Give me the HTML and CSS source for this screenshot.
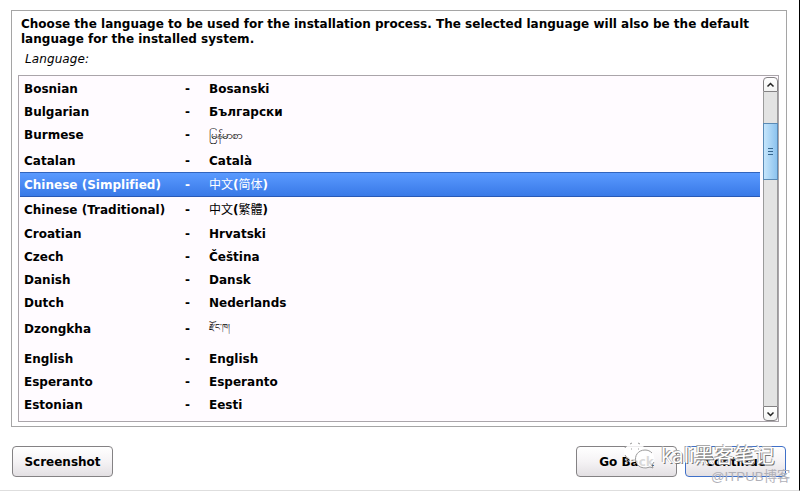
FILE: index.html
```html
<!DOCTYPE html>
<html lang="en">
<head>
  <meta charset="UTF-8">
  <title>Select a language</title>
  <link rel="stylesheet" href="styles.css">
</head>
<body>
  <main class="panel">
    <h1>Choose the language to be used for the installation process. The selected language will also be the default<br>language for the installed system.</h1>
    <p class="label">Language:</p>
    <div class="list-box">
      <ul class="languages">
        <li><span>Bosnian</span><span>-</span><span>Bosanski</span></li>
        <li><span>Bulgarian</span><span>-</span><span>Български</span></li>
        <li class="burmese"><span>Burmese</span><span>-</span><span class="script">မြန်မာစာ</span></li>
        <li><span>Catalan</span><span>-</span><span>Català</span></li>
        <li class="cjk selected"><span>Chinese (Simplified)</span><span>-</span><span><i>中文</i>(<i>简体</i>)</span></li>
        <li class="cjk"><span>Chinese (Traditional)</span><span>-</span><span><i>中文</i>(<i>繁體</i>)</span></li>
        <li><span>Croatian</span><span>-</span><span>Hrvatski</span></li>
        <li><span>Czech</span><span>-</span><span>Čeština</span></li>
        <li><span>Danish</span><span>-</span><span>Dansk</span></li>
        <li><span>Dutch</span><span>-</span><span>Nederlands</span></li>
        <li class="dzongkha"><span>Dzongkha</span><span>-</span><span class="script">རྫོང་ཁ།</span></li>
        <li><span>English</span><span>-</span><span>English</span></li>
        <li><span>Esperanto</span><span>-</span><span>Esperanto</span></li>
        <li><span>Estonian</span><span>-</span><span>Eesti</span></li>
      </ul>
      <div class="scrollbar">
        <div class="arrow up"><svg width="9" height="6" viewBox="0 0 9 6"><path d="M1.5 4.5l3-3 3 3"/></svg></div>
        <div class="track">
          <div class="thumb"><svg width="5" height="7" viewBox="0 0 5 7"><path d="M0 .5h5M0 3.5h5M0 6.5h5"/></svg></div>
        </div>
        <div class="arrow down"><svg width="9" height="6" viewBox="0 0 9 6"><path d="M1.5 1.5l3 3 3-3"/></svg></div>
      </div>
    </div>
  </main>

  <footer class="buttons">
    <button>Screenshot</button>
    <button class="back">Go Back</button>
    <button class="primary">Continue</button>
  </footer>

  <div class="watermark">
    <svg width="34" height="28" viewBox="0 0 34 28">
      <ellipse class="bubble" cx="12" cy="11" rx="11" ry="9"/>
      <path class="bubble-edge" d="M2 7l1-2M7 3l2-1M15 2l2 1M2 14l2 3M4 18l-1 3 4-2M8 8h1M15 8h1"/>
      <circle class="bubble" cx="22" cy="18" r="9.5"/>
      <path class="bubble-edge" d="M13 21c-2-6 2-12 9-12 3 0 5 1 7 3M14 23c2 3 5 4 9 4l4-1 3 1-1-3 2-3"/>
    </svg>
    <span>kali<b>黑客笔记</b></span>
  </div>
  <div class="credit">@ITPUB博客</div>
</body>
</html>
```

FILE: styles.css
```css
* {
  box-sizing: border-box;
}

body {
  position: relative;
  width: 800px;
  height: 491px;
  margin: 0;
  padding: 10px 12px 0 11px;
  overflow: hidden;
  background: #fff;
  border-right: 1px solid #000;
  border-bottom: 1px solid #dedede;
  color: #000;
  font: bold 12px/15px "DejaVu Sans", "Noto Sans CJK SC", sans-serif;
  letter-spacing: .01px;
}

.panel {
  width: 776px;
  height: 417px;
  padding: 6px 7px 0;
  border: 1px solid #a5a5a5;
}

h1 {
  margin: 0 0 0 2px;
  font-size: 12px;
  line-height: 15px;
  white-space: nowrap;
}

.label {
  margin: 5px 0 8px 6px;
  font-weight: normal;
  font-style: italic;
  letter-spacing: .1px;
}

.list-box {
  display: flex;
  justify-content: space-between;
  width: 761px;
  height: 347px;
  margin-left: -1px;
  padding: 1px 0 0 1px;
  border: 1px solid #aaa5aa;
  background: #fffbff;
}

.languages {
  width: 740px;
  margin: 0;
  padding: 0;
  list-style: none;
}

.languages li {
  display: grid;
  grid-template-columns: 161px 24px 1fr;
  align-items: center;
  height: 23px;
  padding: 2px 0 0 4px;
  white-space: nowrap;
}

.languages li.cjk {
  height: 25px;
}

.languages i {
  font-weight: normal;
  font-style: normal;
}

.languages li.burmese {
  height: 26px;
  padding-bottom: 3px;
}

.languages li.dzongkha {
  height: 33px;
  padding-bottom: 4px;
}

.script {
  font-size: 11.5px;
  font-weight: normal;
}

.dzongkha .script {
  padding-bottom: 4px;
  font-size: 8.5px;
}

.languages li.selected {
  border-top: 1px solid #3164bd;
  border-bottom: 1px solid #2959b5;
  background: linear-gradient(#5a9aff, #3979e7);
  color: #fff;
}

.scrollbar {
  display: flex;
  flex-direction: column;
  width: 15px;
  height: 344px;
}

.arrow {
  display: flex;
  align-items: center;
  justify-content: center;
  width: 15px;
  height: 15px;
  border: 1px solid #848284;
  background: linear-gradient(#fff, #f3f3f3);
}

.up {
  border-radius: 4px 4px 0 0;
}

.down {
  border-radius: 0 0 4px 4px;
}

.arrow path {
  fill: none;
  stroke: #222;
  stroke-width: 1.5;
}

.track {
  flex: 1;
  width: 15px;
  padding-top: 31px;
  border: solid #9a9a9a;
  border-width: 0 1px;
  background: #e3e3e3;
}

.thumb {
  display: flex;
  align-items: center;
  justify-content: center;
  width: 15px;
  height: 57px;
  margin-left: -1px;
  border: 1px solid #5a8ab5;
  background: linear-gradient(90deg, #c6e5fb, #8cc3ef);
}

.thumb path {
  stroke: #35668f;
}

.buttons {
  display: flex;
  width: 774px;
  margin: 19px 0 0 1px;
}

button {
  width: 101px;
  height: 31px;
  padding: 1px 0 0;
  border: 1px solid #848284;
  border-radius: 4px;
  background: linear-gradient(#fff, #f5f3f5 50%, #e3e0e3);
  color: #000;
  font: inherit;
}

.back {
  margin-left: auto;
}

.primary {
  margin-left: 8px;
  border: 1px solid #3f70c8;
}

/* Overlaid marks in the lower right corner */
.watermark {
  position: absolute;
  left: 623px;
  top: 441px;
  display: flex;
  color: #fff;
  font: 21px/28px "Open Sans", "Noto Sans CJK SC", sans-serif;
  text-shadow: 1px 1px 0 #777, -1px -1px 0 #aaa;
  white-space: nowrap;
}

.watermark span {
  margin-left: 4px;
}

.watermark b {
  font-weight: normal;
  font-size: 20px;
}

.bubble {
  fill: #fff;
  fill-opacity: .85;
}

.bubble-edge {
  fill: none;
  stroke: #999;
}

.credit {
  position: absolute;
  left: 711px;
  top: 468px;
  color: #b0b0b8;
  font: 13.3px/17px "Liberation Sans", "Noto Sans CJK SC", sans-serif;
  white-space: nowrap;
}
```
